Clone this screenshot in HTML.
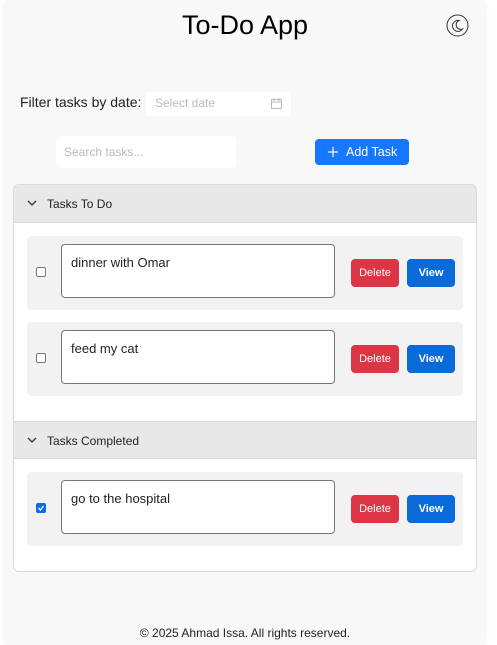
<!DOCTYPE html>
<html><head><style>
*{box-sizing:border-box;margin:0;padding:0}
body{width:497px;height:645px;background:#fff;font-family:"Comic Sans MS","Liberation Sans",sans-serif;position:relative;overflow:hidden;color:#222}
.card{position:absolute;left:5px;top:0;width:480px;height:645px;background:#f8f8f8;box-shadow:0 0 6px rgba(0,0,0,.08);border-radius:6px}
.abs{position:absolute}
h1{position:absolute;left:0;width:490px;top:10px;text-align:center;font-size:27px;font-weight:normal;color:#000}
.panel{position:absolute;left:13px;width:464px;border:1px solid #d9d9d9;border-radius:6px;overflow:hidden;top:184px;height:388px;background:#fff}
.hd{position:absolute;left:0;width:464px;height:38px;background:#e8e8e8;border-bottom:1px solid #d9d9d9;font-size:12px;line-height:38px;padding-left:33px;color:#222}
.hd svg{position:absolute;left:13px;top:15px}
.row{position:absolute;left:13px;width:436px;height:74px;background:#f2f2f2;border-radius:4px}
.cb{position:absolute;left:9px;top:31px;width:10px;height:10px;border:1px solid #777;border-radius:2px;background:#fff}
.ta{position:absolute;left:34px;top:8px;width:274px;height:54px;border:1px solid #777;border-radius:4px;background:#fff;font-size:13px;padding:10px 9px}
.del,.view{position:absolute;top:23px;width:48px;height:28px;border-radius:4px;color:#fff;font-size:11px;text-align:center;line-height:28px}
.del{left:324px;background:#dc3545}
.view{left:380px;background:#0a6ad9;font-weight:bold}
</style></head><body>
<div class="card"></div>
<h1>To-Do App</h1>
<svg class="abs" style="left:446px;top:14px" width="23" height="23" viewBox="0 0 23 23"><circle cx="11.5" cy="11.5" r="10.5" fill="none" stroke="#333" stroke-width="1"/><path d="M13 6.5a5.5 5.5 0 1 0 3.5 8.5a4.5 4.5 0 0 1-3.5-8.5z" fill="none" stroke="#333" stroke-width="1"/></svg>
<div class="abs" style="left:20px;top:94px;font-size:14px;color:#222">Filter tasks by date:</div>
<div class="abs" style="left:146px;top:92px;width:145px;height:24px;background:#fff;border-radius:4px;font-size:12px;color:#bbb;padding:4px 9px">Select date</div>
<svg class="abs" style="left:271px;top:98px" width="11" height="11" viewBox="0 0 11 11"><rect x=".5" y="1.5" width="10" height="9" fill="none" stroke="#bbb"/><path d="M.5 4h10M3 0v3M8 0v3" stroke="#bbb"/></svg>
<div class="abs" style="left:56px;top:136px;width:180px;height:32px;background:#fff;border-radius:4px;font-size:12px;color:#bbb;padding:9px 8px">Search tasks...</div>
<div class="abs" style="left:315px;top:139px;width:94px;height:26px;background:#1677ff;border-radius:4px;color:#fff;font-size:12.5px;line-height:26px;padding-left:31px">Add Task</div>
<svg class="abs" style="left:328px;top:147px" width="10" height="10"><path d="M5 0v10M0 5h10" stroke="#fff" stroke-width="1.2"/></svg>
<div class="panel">
<div class="hd" style="top:0"><svg width="10" height="7"><path d="M1 1l4 4 4-4" fill="none" stroke="#333" stroke-width="1.3"/></svg>Tasks To Do</div>
<div class="row" style="top:51px"><div class="cb"></div><div class="ta">dinner with Omar</div><div class="del">Delete</div><div class="view">View</div></div>
<div class="row" style="top:137px"><div class="cb"></div><div class="ta">feed my cat</div><div class="del">Delete</div><div class="view">View</div></div>
<div class="hd" style="top:236px;border-top:1px solid #d9d9d9"><svg width="10" height="7"><path d="M1 1l4 4 4-4" fill="none" stroke="#333" stroke-width="1.3"/></svg>Tasks Completed</div>
<div class="row" style="top:287px"><div class="cb" style="background:#0b6ee6;border-color:#0b6ee6"><svg width="8" height="8" style="position:absolute;left:0;top:0"><path d="M1.5 4l2 2 3-4" fill="none" stroke="#fff" stroke-width="1.3"/></svg></div><div class="ta">go to the hospital</div><div class="del">Delete</div><div class="view">View</div></div>
</div>
<div class="abs" style="left:0;width:490px;top:626px;text-align:center;font-size:12px;color:#222">© 2025 Ahmad Issa. All rights reserved.</div>
</body></html>
